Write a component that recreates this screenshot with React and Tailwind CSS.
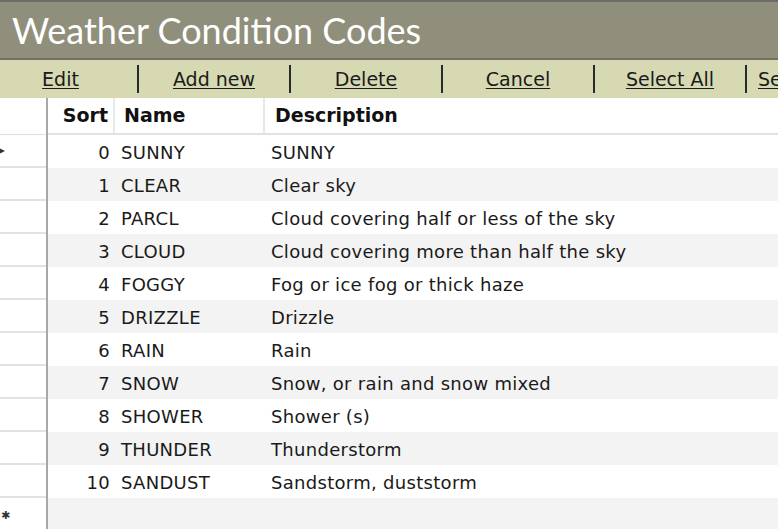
const rows = [
  [0, 'SUNNY', 'SUNNY'],
  [1, 'CLEAR', 'Clear sky'],
  [2, 'PARCL', 'Cloud covering half or less of the sky'],
  [3, 'CLOUD', 'Cloud covering more than half the sky'],
  [4, 'FOGGY', 'Fog or ice fog or thick haze'],
  [5, 'DRIZZLE', 'Drizzle'],
  [6, 'RAIN', 'Rain'],
  [7, 'SNOW', 'Snow, or rain and snow mixed'],
  [8, 'SHOWER', 'Shower (s)'],
  [9, 'THUNDER', 'Thunderstorm'],
  [10, 'SANDUST', 'Sandstorm, duststorm'],
]

const actions = ['Add new', 'Delete', 'Cancel', 'Select All']

function Toolbar() {
  return (
    <div className="flex h-[38px] items-center overflow-hidden bg-[#d6d9b2] text-[19px] text-[#1a1a1a]">
      <div className="flex w-[137px] shrink-0 items-center justify-center pr-[16px]">
        <span className="underline underline-offset-2">Edit</span>
      </div>
      {actions.map((a) => (
        <div key={a} className="flex w-[152px] shrink-0 items-center">
          <div className="h-[28px] w-[2px] bg-[#2a2a2a]" />
          <span className="flex-1 text-center underline underline-offset-2">{a}</span>
        </div>
      ))}
      <div className="flex shrink-0 items-center">
        <div className="h-[28px] w-[2px] bg-[#2a2a2a]" />
        <span className="ml-[11px] whitespace-nowrap underline underline-offset-2">Search</span>
      </div>
    </div>
  )
}

export default function App() {
  return (
    <div className="h-[529px] w-[778px] overflow-hidden bg-white font-['DejaVu_Sans',sans-serif]">
      {/* Title bar */}
      <div className="h-[2px] bg-[#6b6b6b]" />
      <div className="flex h-[56px] items-center bg-[#8f8f7b] pl-[12px] font-['Lato',sans-serif] text-[36px] text-white">
        Weather Condition Codes
      </div>
      <div className="h-[2px] bg-[#707064]" />
      <Toolbar />

      {/* Grid */}
      <div className="flex">
        {/* row selectors */}
        <div className="w-[48px] shrink-0 border-r-2 border-[#a8a8a8]">
          <div className="h-[37px] border-b border-[#dedede]" />
          {rows.map((r, i) => (
            <div key={r[0]} className="relative h-[33px] border-b-2 border-[#e2e2e2]">
              {i === 0 && (
                <span className="absolute left-[-5px] top-[11px] h-0 w-0 border-y-[5px] border-l-[10px] border-y-transparent border-l-[#333]" />
              )}
            </div>
          ))}
          <div className="relative h-[33px]">
            <span className="absolute left-[1px] top-[12px] text-[11px] leading-none text-[#333]">✱</span>
          </div>
        </div>

        <div className="flex-1">
          <div className="flex h-[37px] items-center border-b-2 border-[#e2e2e2] text-[19px] font-bold text-[#111]">
            <div className="flex h-full w-[67px] items-center justify-end border-r-2 border-[#e8e8e8] pr-[5px]">Sort</div>
            <div className="flex h-full w-[150px] items-center border-r-2 border-[#e8e8e8] pl-[9px]">Name</div>
            <div className="pl-[10px]">Description</div>
          </div>
          {rows.map((r, i) => (
            <div
              key={r[0]}
              className={`flex h-[33px] items-center pt-[2px] text-[18px] tracking-[0.3px] text-[#1a1a1a] ${i % 2 ? 'bg-[#f3f3f3]' : 'bg-white'}`}
            >
              <div className="w-[62px] text-right">{r[0]}</div>
              <div className="w-[150px] pl-[11px]">{r[1]}</div>
              <div className="pl-[11px]">{r[2]}</div>
            </div>
          ))}
          <div className="h-[40px] bg-[#f3f3f3]" />
        </div>
      </div>
    </div>
  )
}
